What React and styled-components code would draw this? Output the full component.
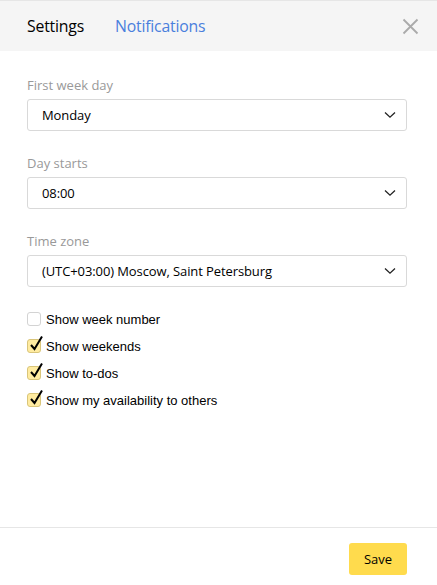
import React from "react";
import styled, { createGlobalStyle } from "styled-components";

const Global = createGlobalStyle`
  html, body { margin: 0; padding: 0; background: #fff; }
  body { font-family: "Open Sans", "Noto Sans", sans-serif; }
  #root { width: 437px; height: 585px; }
`;

const Panel = styled.div`
  width: 437px;
  height: 585px;
  display: flex;
  flex-direction: column;
  background: #fff;
  box-sizing: border-box;
`;

const Header = styled.div`
  height: 51px;
  background: #f5f5f5;
  border-top: 1px solid #e6e6e6;
  box-sizing: border-box;
  display: flex;
  align-items: center;
  padding: 0 18px 0 27px;
  gap: 31px;
`;

const Tab = styled.span`
  font-size: 15.8px;
  color: ${(p) => (p.$active ? "#000" : "#4a7fdd")};
  letter-spacing: -0.2px;
`;

const Close = styled.button`
  margin-left: auto;
  width: 17px;
  height: 17px;
  padding: 0;
  border: 0;
  background: none;
  display: flex;
  cursor: pointer;
`;

const Body = styled.div`
  flex: 1;
  padding: 25px 30px 0 27px;
  display: flex;
  flex-direction: column;
`;

const Field = styled.div`
  display: flex;
  flex-direction: column;
  gap: 5px;
  margin-bottom: 23px;
`;

const Label = styled.div`
  font-size: 13px;
  color: #999;
  line-height: 18px;
`;

const Select = styled.div`
  height: 32px;
  border: 1px solid #d9d9d9;
  border-radius: 3px;
  box-sizing: border-box;
  display: flex;
  align-items: center;
  padding: 0 10px 0 14px;
  font-size: 13px;
  color: #000;
`;

const SelectText = styled.span`
  flex: 1;
  letter-spacing: -0.1px;
`;

const Checks = styled.div`
  display: flex;
  flex-direction: column;
  gap: 13px;
  margin-top: 2px;
`;

const CheckRow = styled.label`
  display: flex;
  align-items: center;
  gap: 5px;
  font-family: "Liberation Sans", Arial, sans-serif;
  font-size: 13px;
  color: #000;
  height: 14px;
`;

const Box = styled.span`
  position: relative;
  width: 14px;
  height: 14px;
  box-sizing: border-box;
  border-radius: 3px;
  border: 1px solid ${(p) => (p.$checked ? "#d9c57a" : "#d3d3d3")};
  background: ${(p) => (p.$checked ? "#ffeba0" : "#fff")};
  flex: none;
`;

const Tick = styled.svg`
  position: absolute;
  left: 1px;
  top: -5px;
`;

const Footer = styled.div`
  border-top: 1px solid #e6e6e6;
  height: 58px;
  box-sizing: border-box;
  display: flex;
  justify-content: flex-end;
  align-items: flex-start;
  padding: 15px 30px 0 0;
`;

const SaveButton = styled.button`
  width: 58px;
  height: 32px;
  border: 0;
  border-radius: 3px;
  background: #ffdb4d;
  font-family: "Open Sans", "Noto Sans", sans-serif;
  font-size: 13px;
  color: #000;
  cursor: pointer;
`;

const Chevron = () => (
  <svg width="12" height="8" viewBox="0 0 12 8">
    <path d="M1 1.5 L6 6.2 L11 1.5" fill="none" stroke="#222" strokeWidth="1.3" />
  </svg>
);

const CheckItem = ({ checked, children }) => (
  <CheckRow>
    <Box $checked={checked}>
      {checked && (
        <Tick width="15" height="17" viewBox="0 0 15 17">
          <path d="M2 10 L5.5 14 L13 1.5" fill="none" stroke="#000" strokeWidth="2" />
        </Tick>
      )}
    </Box>
    {children}
  </CheckRow>
);

export default function App() {
  return (
    <>
      <Global />
      <Panel>
        <Header>
          <Tab $active>Settings</Tab>
          <Tab>Notifications</Tab>
          <Close aria-label="Close">
            <svg width="17" height="17" viewBox="0 0 17 17">
              <path d="M1.5 1.5 L15.5 15.5 M15.5 1.5 L1.5 15.5" stroke="#aaa" strokeWidth="1.8" />
            </svg>
          </Close>
        </Header>
        <Body>
          <Field>
            <Label>First week day</Label>
            <Select>
              <SelectText>Monday</SelectText>
              <Chevron />
            </Select>
          </Field>
          <Field>
            <Label>Day starts</Label>
            <Select>
              <SelectText>08:00</SelectText>
              <Chevron />
            </Select>
          </Field>
          <Field>
            <Label>Time zone</Label>
            <Select>
              <SelectText>(UTC+03:00) Moscow, Saint Petersburg</SelectText>
              <Chevron />
            </Select>
          </Field>
          <Checks>
            <CheckItem>Show week number</CheckItem>
            <CheckItem checked>Show weekends</CheckItem>
            <CheckItem checked>Show to-dos</CheckItem>
            <CheckItem checked>Show my availability to others</CheckItem>
          </Checks>
        </Body>
        <Footer>
          <SaveButton>Save</SaveButton>
        </Footer>
      </Panel>
    </>
  );
}
